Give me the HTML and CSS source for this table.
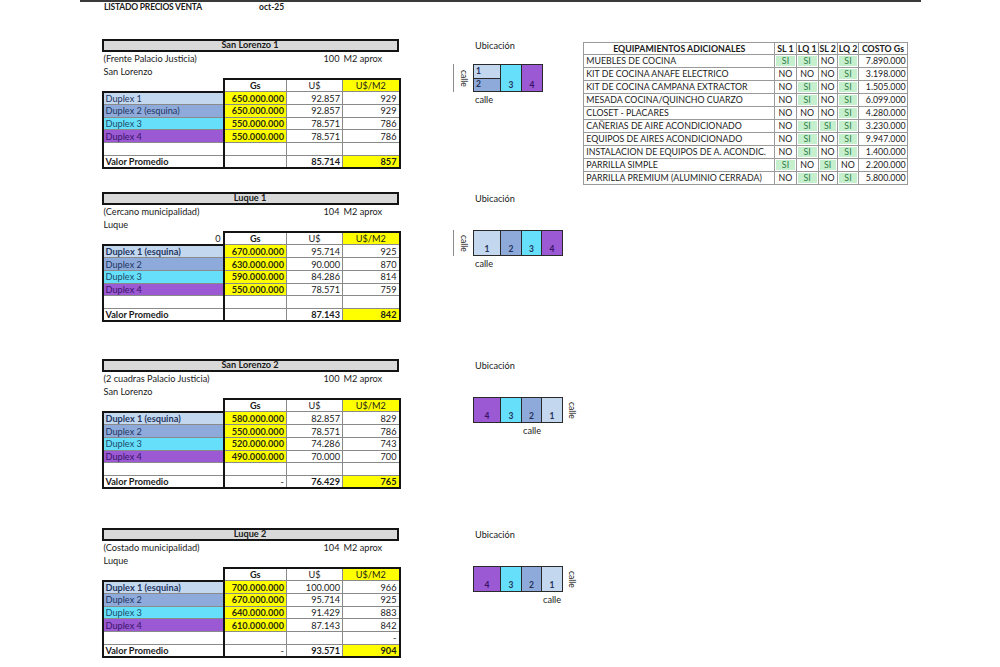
FILE: index.html
```html
<!DOCTYPE html>
<html lang="es">
<head>
<meta charset="utf-8">
<title>Listado precios venta</title>
<link rel="stylesheet" href="styles.css">
</head>
<body>
<div class="page">
  <div class="topline"></div>
  <div class="title"><span class="title-main">LISTADO PRECIOS VENTA</span><span class="title-date">oct-25</span></div>

  <section class="section s1">
    <div class="block">
      <div class="bar"><span>San Lorenzo 1</span></div>
      <div class="info"><span class="info-name">(Frente Palacio Justicia)</span><span class="info-num">100</span><span class="info-unit">M2 aprox</span></div>
      <div class="info"><span class="info-name">San Lorenzo</span></div>
      <table class="prices">
        <colgroup><col class="c-lbl"><col class="c-gs"><col class="c-us"><col class="c-m2"></colgroup>
        <tr class="head"><td class="blank"></td><td class="gs-col hc b">Gs</td><td class="hc">U$</td><td class="m2-col hc yel">U$/M2</td></tr>
        <tr class="first"><td class="lbl d1">Duplex 1</td><td class="gs-col gs">650.000.000</td><td class="num">92.857</td><td class="m2-col num">929</td></tr>
        <tr><td class="lbl d2">Duplex 2 (esquina)</td><td class="gs-col gs">650.000.000</td><td class="num">92.857</td><td class="m2-col num">929</td></tr>
        <tr><td class="lbl d3">Duplex 3</td><td class="gs-col gs">550.000.000</td><td class="num">78.571</td><td class="m2-col num">786</td></tr>
        <tr><td class="lbl d4">Duplex 4</td><td class="gs-col gs">550.000.000</td><td class="num">78.571</td><td class="m2-col num">786</td></tr>
        <tr><td class="lbl"></td><td class="gs-col"></td><td class="num"></td><td class="m2-col num"></td></tr>
        <tr class="last"><td class="lbl b">Valor Promedio</td><td class="gs-col num"></td><td class="num b">85.714</td><td class="m2-col num b yel">857</td></tr>
      </table>
    </div>
    <div class="ubic">
      <div class="ubic-title">Ubicación</div>
      <div class="plan plan-a">
        <div class="side side-left"><span class="vtext">calle</span></div>
        <div class="lot">
          <div class="stack">
            <div class="cell c1 tl">1</div>
            <div class="cell c2 tl">2</div>
          </div>
          <div class="cell c3">3</div>
          <div class="cell c4">4</div>
        </div>
      </div>
      <div class="street">calle</div>
    </div>
    <table class="equip">
      <colgroup><col class="e-name"><col class="e-1"><col class="e-2"><col class="e-3"><col class="e-4"><col class="e-cost"></colgroup>
      <tr class="e-head"><th>EQUIPAMIENTOS ADICIONALES</th><th>SL 1</th><th>LQ 1</th><th>SL 2</th><th>LQ 2</th><th>COSTO Gs</th></tr>
      <tr><td>MUEBLES DE COCINA</td><td class="si">SI</td><td class="si">SI</td><td class="no">NO</td><td class="si">SI</td><td class="cost">7.890.000</td></tr>
      <tr><td>KIT DE COCINA ANAFE ELECTRICO</td><td class="no">NO</td><td class="no">NO</td><td class="no">NO</td><td class="si">SI</td><td class="cost">3.198.000</td></tr>
      <tr><td>KIT DE COCINA CAMPANA EXTRACTOR</td><td class="no">NO</td><td class="si">SI</td><td class="no">NO</td><td class="si">SI</td><td class="cost">1.505.000</td></tr>
      <tr><td>MESADA COCINA/QUINCHO CUARZO</td><td class="no">NO</td><td class="si">SI</td><td class="no">NO</td><td class="si">SI</td><td class="cost">6.099.000</td></tr>
      <tr><td>CLOSET - PLACARES</td><td class="no">NO</td><td class="no">NO</td><td class="no">NO</td><td class="si">SI</td><td class="cost">4.280.000</td></tr>
      <tr><td>CAÑERIAS DE AIRE ACONDICIONADO</td><td class="no">NO</td><td class="si">SI</td><td class="si">SI</td><td class="si">SI</td><td class="cost">3.230.000</td></tr>
      <tr><td>EQUIPOS DE AIRES ACONDICIONADO</td><td class="no">NO</td><td class="si">SI</td><td class="no">NO</td><td class="si">SI</td><td class="cost">9.947.000</td></tr>
      <tr><td>INSTALACION DE EQUIPOS DE A. ACONDIC.</td><td class="no">NO</td><td class="si">SI</td><td class="no">NO</td><td class="si">SI</td><td class="cost">1.400.000</td></tr>
      <tr><td>PARRILLA SIMPLE</td><td class="si">SI</td><td class="no">NO</td><td class="si">SI</td><td class="no">NO</td><td class="cost">2.200.000</td></tr>
      <tr><td>PARRILLA PREMIUM (ALUMINIO CERRADA)</td><td class="no">NO</td><td class="si">SI</td><td class="no">NO</td><td class="si">SI</td><td class="cost">5.800.000</td></tr>
    </table>
  </section>

  <section class="section s2">
    <div class="block">
      <div class="bar"><span>Luque 1</span></div>
      <div class="info"><span class="info-name">(Cercano municipalidad)</span><span class="info-num">104</span><span class="info-unit">M2 aprox</span></div>
      <div class="info"><span class="info-name">Luque</span></div>
      <table class="prices">
        <colgroup><col class="c-lbl"><col class="c-gs"><col class="c-us"><col class="c-m2"></colgroup>
        <tr class="head"><td class="blank num">0</td><td class="gs-col hc b">Gs</td><td class="hc">U$</td><td class="m2-col hc yel">U$/M2</td></tr>
        <tr class="first"><td class="lbl d1 b">Duplex 1 (esquina)</td><td class="gs-col gs">670.000.000</td><td class="num">95.714</td><td class="m2-col num">925</td></tr>
        <tr><td class="lbl d2">Duplex 2</td><td class="gs-col gs">630.000.000</td><td class="num">90.000</td><td class="m2-col num">870</td></tr>
        <tr><td class="lbl d3">Duplex 3</td><td class="gs-col gs">590.000.000</td><td class="num">84.286</td><td class="m2-col num">814</td></tr>
        <tr><td class="lbl d4">Duplex 4</td><td class="gs-col gs">550.000.000</td><td class="num">78.571</td><td class="m2-col num">759</td></tr>
        <tr><td class="lbl"></td><td class="gs-col"></td><td class="num"></td><td class="m2-col num"></td></tr>
        <tr class="last"><td class="lbl b">Valor Promedio</td><td class="gs-col num"></td><td class="num b">87.143</td><td class="m2-col num b yel">842</td></tr>
      </table>
    </div>
    <div class="ubic">
      <div class="ubic-title">Ubicación</div>
      <div class="plan">
        <div class="side side-left"><span class="vtext">calle</span></div>
        <div class="lot">
          <div class="cell c1 wide">1</div>
          <div class="cell c2">2</div>
          <div class="cell c3 narrow">3</div>
          <div class="cell c4">4</div>
        </div>
      </div>
      <div class="street">calle</div>
    </div>
  </section>

  <section class="section s3">
    <div class="block">
      <div class="bar"><span>San Lorenzo 2</span></div>
      <div class="info"><span class="info-name">(2 cuadras Palacio Justicia)</span><span class="info-num">100</span><span class="info-unit">M2 aprox</span></div>
      <div class="info"><span class="info-name">San Lorenzo</span></div>
      <table class="prices">
        <colgroup><col class="c-lbl"><col class="c-gs"><col class="c-us"><col class="c-m2"></colgroup>
        <tr class="head"><td class="blank"></td><td class="gs-col hc b">Gs</td><td class="hc">U$</td><td class="m2-col hc yel">U$/M2</td></tr>
        <tr class="first"><td class="lbl d1 b">Duplex 1 (esquina)</td><td class="gs-col gs">580.000.000</td><td class="num">82.857</td><td class="m2-col num">829</td></tr>
        <tr><td class="lbl d2">Duplex 2</td><td class="gs-col gs">550.000.000</td><td class="num">78.571</td><td class="m2-col num">786</td></tr>
        <tr><td class="lbl d3">Duplex 3</td><td class="gs-col gs">520.000.000</td><td class="num">74.286</td><td class="m2-col num">743</td></tr>
        <tr><td class="lbl d4">Duplex 4</td><td class="gs-col gs">490.000.000</td><td class="num">70.000</td><td class="m2-col num">700</td></tr>
        <tr><td class="lbl"></td><td class="gs-col"></td><td class="num"></td><td class="m2-col num"></td></tr>
        <tr class="last"><td class="lbl b">Valor Promedio</td><td class="gs-col num">-</td><td class="num b">76.429</td><td class="m2-col num b yel">765</td></tr>
      </table>
    </div>
    <div class="ubic">
      <div class="ubic-title">Ubicación</div>
      <div class="plan">
        <div class="side"></div>
        <div class="lot">
          <div class="cell c4 wide">4</div>
          <div class="cell c3">3</div>
          <div class="cell c2 narrow">2</div>
          <div class="cell c1">1</div>
        </div>
        <div class="side-right"><span class="vtext">calle</span></div>
      </div>
      <div class="street street-2">calle</div>
    </div>
  </section>

  <section class="section s4">
    <div class="block">
      <div class="bar"><span>Luque 2</span></div>
      <div class="info"><span class="info-name">(Costado municipalidad)</span><span class="info-num">104</span><span class="info-unit">M2 aprox</span></div>
      <div class="info"><span class="info-name">Luque</span></div>
      <table class="prices">
        <colgroup><col class="c-lbl"><col class="c-gs"><col class="c-us"><col class="c-m2"></colgroup>
        <tr class="head"><td class="blank"></td><td class="gs-col hc b">Gs</td><td class="hc">U$</td><td class="m2-col hc yel">U$/M2</td></tr>
        <tr class="first"><td class="lbl d1 b">Duplex 1 (esquina)</td><td class="gs-col gs">700.000.000</td><td class="num">100.000</td><td class="m2-col num">966</td></tr>
        <tr><td class="lbl d2">Duplex 2</td><td class="gs-col gs">670.000.000</td><td class="num">95.714</td><td class="m2-col num">925</td></tr>
        <tr><td class="lbl d3">Duplex 3</td><td class="gs-col gs">640.000.000</td><td class="num">91.429</td><td class="m2-col num">883</td></tr>
        <tr><td class="lbl d4">Duplex 4</td><td class="gs-col gs">610.000.000</td><td class="num">87.143</td><td class="m2-col num">842</td></tr>
        <tr><td class="lbl"></td><td class="gs-col"></td><td class="num"></td><td class="m2-col num">-</td></tr>
        <tr class="last"><td class="lbl b">Valor Promedio</td><td class="gs-col num">-</td><td class="num b">93.571</td><td class="m2-col num b yel">904</td></tr>
      </table>
    </div>
    <div class="ubic">
      <div class="ubic-title">Ubicación</div>
      <div class="plan">
        <div class="side"></div>
        <div class="lot">
          <div class="cell c4 wide">4</div>
          <div class="cell c3">3</div>
          <div class="cell c2 narrow">2</div>
          <div class="cell c1">1</div>
        </div>
        <div class="side-right"><span class="vtext">calle</span></div>
      </div>
      <div class="street street-1">calle</div>
    </div>
  </section>
</div>
</body>
</html>
```

FILE: styles.css
```css
* { box-sizing: border-box; }
html, body { margin: 0; padding: 0; background: #ffffff; }
body {
  font-family: Lato, "Open Sans", "Liberation Sans", sans-serif;
  font-size: 9.2px;
  color: #1a1a1a;
  width: 1000px;
  height: 667px;
  overflow: hidden;
}
.page { width: 1000px; }

.topline { margin-left: 80px; width: 841px; height: 2px; background: #3a3a3a; }
.title { display: flex; height: 11px; line-height: 11px; padding-left: 104px; font-weight: 700; font-size: 8.5px; }
.title-main { width: 155px; letter-spacing: -0.2px; }

.section { display: flex; align-items: flex-start; }
.s1 { margin-top: 26px; }
.s2 { margin-top: 7.6px; }
.s3 { margin-top: 37.2px; }
.s4 { margin-top: 39px; }

.block { width: 297px; margin-left: 101.5px; flex: none; }
.bar {
  height: 12.5px;
  border: 2px solid #141414;
  background: #d9d9d9;
  display: flex;
  align-items: center;
  justify-content: center;
  font-weight: 700;
}
.bar span { line-height: 8px; margin-top: -1.5px; }
.info {
  display: grid;
  grid-template-columns: 121px 63px 56px 57px;
  height: 13.25px;
  line-height: 13.25px;
  white-space: nowrap;
}
.info-name { grid-column: 1 / 3; padding-left: 2px; }
.info-num { grid-column: 3; text-align: right; padding-right: 2px; }
.info-unit { grid-column: 4; padding-left: 2px; }

.prices { border-collapse: collapse; table-layout: fixed; width: 297px; }
.c-lbl { width: 121px; }
.c-gs { width: 63px; }
.c-us { width: 56px; }
.c-m2 { width: 57px; }
.prices tr { height: 12.7px; }
.prices td {
  border: 1px solid #8a8a8a;
  padding: 0 2px;
  line-height: 9px;
  white-space: nowrap;
  overflow: hidden;
}
.prices .blank { border-top-style: hidden; border-left-style: hidden; text-align: right; }
.prices .hc { text-align: center; border-top: 2px solid #141414; }
.prices .gs-col { border-left: 2px solid #141414; }
.prices .m2-col { border-right: 2px solid #141414; }
.prices .lbl { border-left: 2px solid #141414; }
.prices .first .lbl { border-top: 2px solid #141414; }
.prices .last td { border-bottom: 2px solid #141414; }
.prices .num { text-align: right; }
.prices .gs { text-align: right; font-weight: 700; background: #ffff00; color: #2a2a10; }
.b { font-weight: 700; }
.yel { background: #ffff00; }
.d1 { background: #c3d7ef; color: #1f3560; }
.d2 { background: #8eaadb; color: #1f3560; }
.d3 { background: #66e0fa; color: #1b4a6a; }
.d4 { background: #9b59d4; color: #3a1468; }

.ubic { width: 130.3px; margin-left: 54.5px; flex: none; }
.ubic-title { padding-left: 22px; line-height: 11px; margin-top: 0.5px; }
.plan { display: flex; margin-top: 26.7px; }
.plan-a { margin-top: 13.5px; }
.side { width: 20px; flex: none; }
.side-left { border-left: 1px solid #8c8c8c; display: flex; align-items: center; justify-content: center; }
.side-right { margin-left: 5px; display: flex; align-items: center; }
.vtext { writing-mode: vertical-rl; line-height: 8px; font-size: 8.5px; }
.lot { display: flex; border: 1px solid #2a2a2a; height: 26px; }
.plan-a .lot { height: 28px; }
.stack { display: flex; flex-direction: column; width: 26px; }
.cell {
  width: 21px;
  border-left: 1px solid #2a2a2a;
  display: flex;
  align-items: flex-end;
  justify-content: center;
  padding-bottom: 1px;
  font-weight: 700;
  font-size: 8.5px;
  line-height: 9px;
  color: #25325c;
}
.cell.wide { width: 26px; border-left: none; }
.cell.narrow { width: 20px; }
.stack .cell { width: 26px; flex: 1; border-left: none; align-items: center; justify-content: flex-start; padding: 0 0 0 2px; }
.stack .c2 { border-top: 1px solid #2a2a2a; }
.c1 { background: #c3d7ef; }
.c2 { background: #8eaadb; }
.c3 { background: #66e0fa; }
.c4 { background: #9b59d4; color: #3a1468; }
.street { line-height: 11px; margin-top: 1.5px; padding-left: 22px; }
.street-2 { padding-left: 70px; }
.street-1 { padding-left: 90px; }

.equip {
  flex: none;
  margin-top: 2.7px;
  border-collapse: collapse;
  table-layout: fixed;
  width: 323.4px;
  border: 1px solid #4a4a4a;
}
.e-name { width: 191px; }
.e-1 { width: 21.4px; }
.e-2 { width: 22px; }
.e-3 { width: 19px; }
.e-4 { width: 21.6px; }
.e-cost { width: 48.4px; }
.equip tr { height: 13px; }
.equip .e-head { height: 12px; }
.equip th, .equip td {
  border: 1px solid #9a9a9a;
  padding: 0 1px 0 2px;
  font-size: 8.8px;
  line-height: 9px;
  white-space: nowrap;
  overflow: hidden;
}
.equip th { font-weight: 700; text-align: center; padding: 0; }
.equip .si { background: #c6efce; color: #2f7d45; text-align: center; box-shadow: inset 0 0 0 1px #ffffff; padding: 0; }
.equip .no { text-align: center; padding: 0; }
.equip .cost { text-align: right; }
```
